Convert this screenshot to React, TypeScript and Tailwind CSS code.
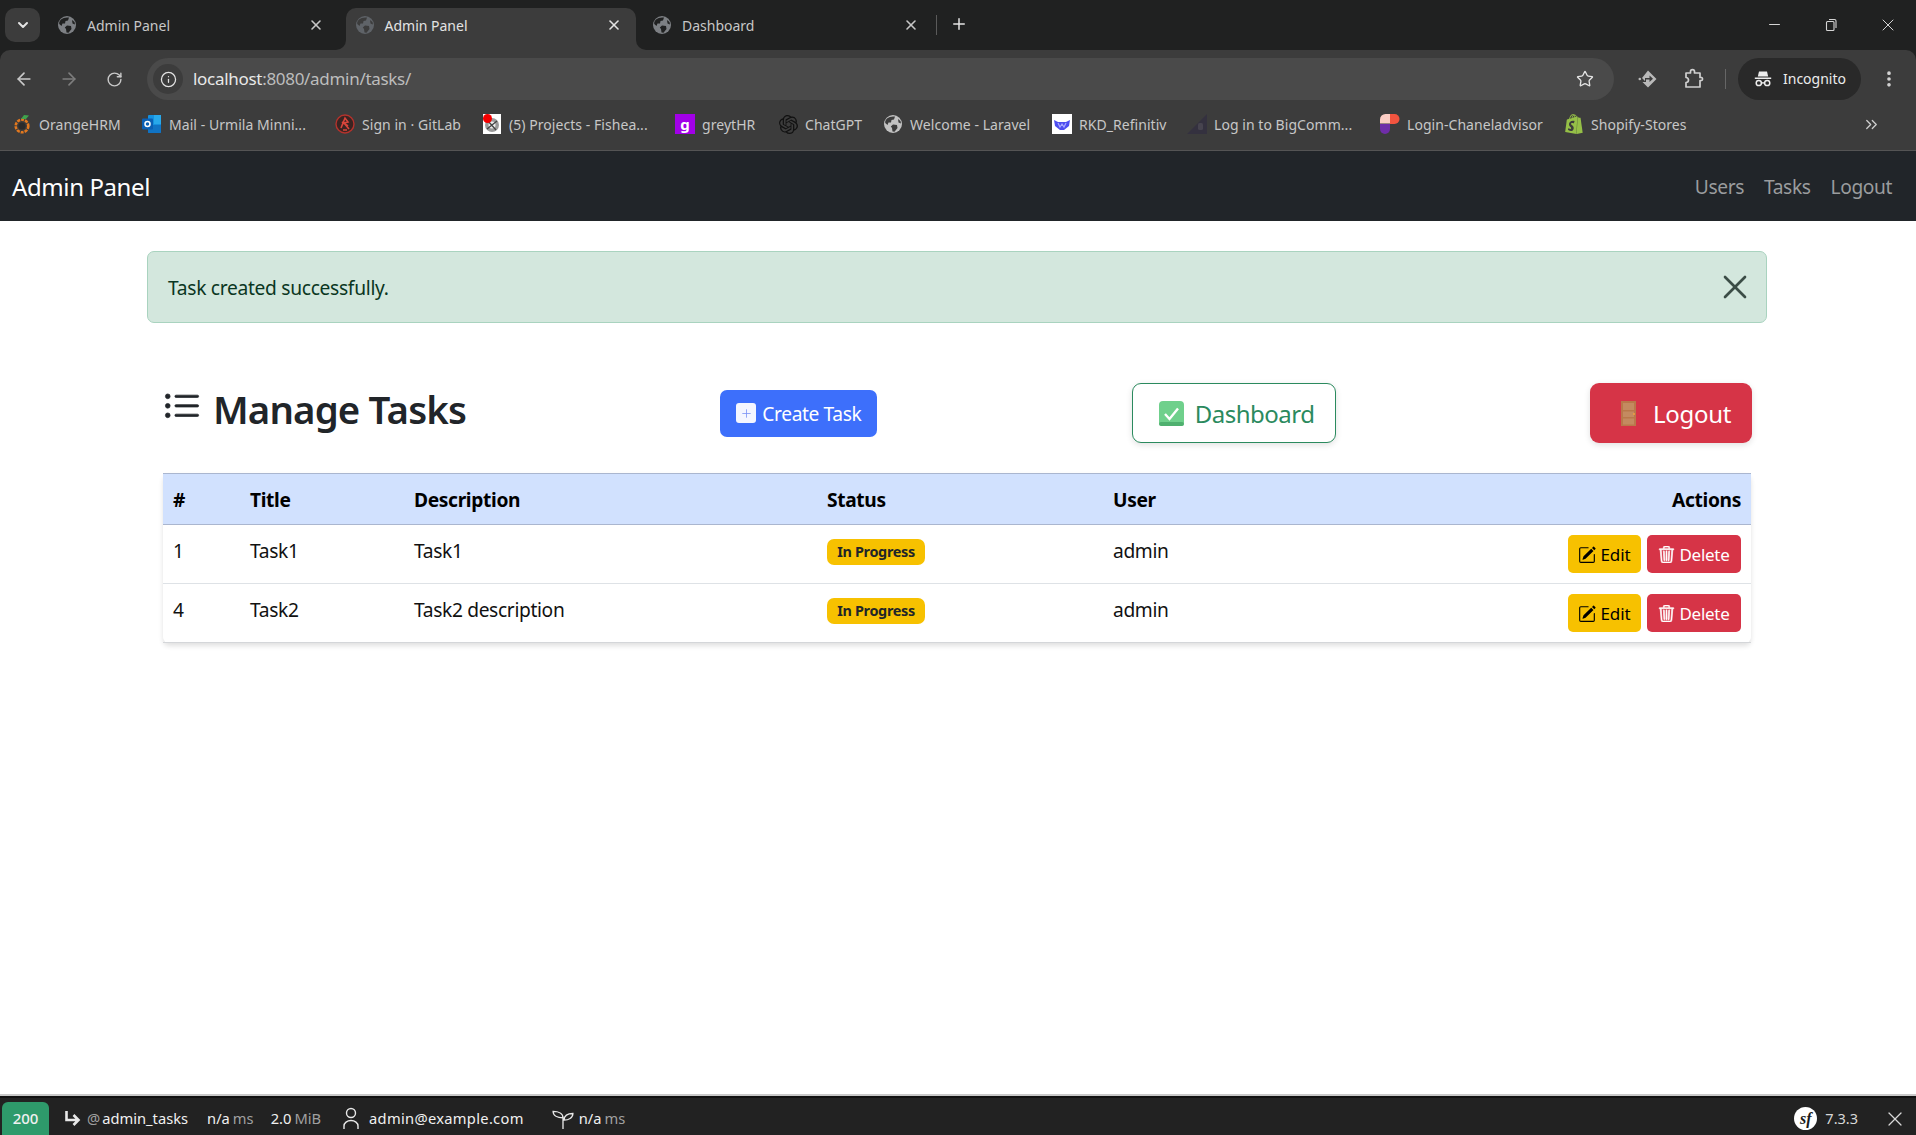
import { ArrowLeft, ArrowRight, Info, Plus, RotateCw, Star, Minus, X, EllipsisVertical, ChevronDown, ChevronsRight } from 'lucide-react'
import { BsListUl, BsPencilSquare, BsTrash3 } from 'react-icons/bs'
import { SiOpenai, SiShopify } from 'react-icons/si'

function Globe({ fill, land, size = 18 }: { fill: string; land: string; size?: number }) {
  return (
    <svg width={size} height={size} viewBox="0 0 18 18" className="shrink-0">
      <circle cx="9" cy="9" r="9" fill={fill} />
      <path d="M3 3.5 C5 2 8 1 11 1.6 L10 4.5 L7.5 5 L7 7.5 L4.5 7.5 L3.5 10 L1.2 8 C1 6 1.8 4.6 3 3.5Z" fill={land} />
      <path d="M9 9.5 L13 10 L13.5 13 L10.5 16.8 L8.5 16.5 L8 13 L6.8 11.5Z" fill={land} />
      <path d="M14 4 L16.5 6 L17 8.5 L14.5 7.5Z" fill={land} />
    </svg>
  )
}

function Tab({ title, active }: { title: string; active?: boolean }) {
  return (
    <div className={active ? 'relative flex h-[42px] w-[290px] items-center rounded-t-[10px] bg-[#3c3c3c] pl-[10px] pr-[14px] pb-[8px]' : 'flex h-[42px] w-[290px] items-center pl-[10px] pr-[14px] pb-[8px]'}>
      <Globe fill={active ? '#5f6368' : '#7d8084'} land={active ? '#3c3c3c' : '#202121'} />
      <span className={active ? 'ml-[11px] flex-1 text-[14px] text-[#e3e3e3]' : 'ml-[11px] flex-1 text-[14px] text-[#c7c7c7]'}>{title}</span>
      <X size={16} strokeWidth={2.4} className={active ? 'text-[#e3e3e3]' : 'text-[#c7c7c7]'} />
      {active && (
        <>
          <div className="absolute bottom-0 left-[-10px] h-[10px] w-[10px] bg-[#3c3c3c]">
            <div className="h-full w-full rounded-br-[10px] bg-[#202121]" />
          </div>
          <div className="absolute bottom-0 right-[-10px] h-[10px] w-[10px] bg-[#3c3c3c]">
            <div className="h-full w-full rounded-bl-[10px] bg-[#202121]" />
          </div>
        </>
      )}
    </div>
  )
}

function RestoreIcon() {
  return (
    <svg width="14" height="14" viewBox="0 0 14 14" fill="none" stroke="#d5d5d5" strokeWidth="1.1">
      <rect x="2.5" y="3.5" width="7.5" height="9" rx="1" />
      <path d="M5 1.5 H10.5 A1.5 1.5 0 0 1 12 3 V10" />
    </svg>
  )
}

function SendIcon() {
  return (
    <svg width="22" height="22" viewBox="0 0 22 22">
      <path d="M11 2.5 L19.5 11 L11 19.5 L5.5 14 H9 V11.5 H12.5 V14 L16 10.8 L12.5 7.6 V10 H8 V13 L5 10 Z" fill="#b9b9b9" />
      <circle cx="2.8" cy="11" r="1.3" fill="#b9b9b9" />
    </svg>
  )
}

function PuzzleIcon() {
  return (
    <svg width="22" height="22" viewBox="0 0 22 22" fill="none" stroke="#d0d0d0" strokeWidth="1.7" strokeLinejoin="round">
      <path d="M4 5 H8.5 V3.6 A2 2 0 0 1 12.5 3.6 V5 H18 V9.5 H19.5 A1.6 1.6 0 0 1 19.5 12.5 H18 V19 H4 V14.5 A2.6 2.6 0 0 0 6.5 12 A2.6 2.6 0 0 0 4 9.5 Z" />
    </svg>
  )
}

function IncognitoIcon() {
  return (
    <svg width="18" height="18" viewBox="0 0 18 18" fill="#ececec">
      <path d="M5 1.5 H13 L14.2 6.5 H3.8 Z" />
      <rect x="0.8" y="7.5" width="16.4" height="1.5" />
      <circle cx="4.8" cy="13" r="2.6" fill="none" stroke="#ececec" strokeWidth="1.5" />
      <circle cx="13.2" cy="13" r="2.6" fill="none" stroke="#ececec" strokeWidth="1.5" />
      <rect x="7.2" y="12.2" width="3.6" height="1.4" />
    </svg>
  )
}

function OrangeIcon() {
  return (
    <svg width="18" height="20" viewBox="0 0 18 20" fill="none">
      <circle cx="9" cy="12" r="6.3" stroke="#e2781f" strokeWidth="2.6" strokeDasharray="3 1" />
      <circle cx="9" cy="12" r="3.5" fill="#2b2b2b" />
      <path d="M8 5 L11 1 L16 1.5 L13 5 Z" fill="#3fa34d" />
    </svg>
  )
}

function OutlookIcon() {
  return (
    <svg width="20" height="20" viewBox="0 0 20 20">
      <rect x="6" y="1" width="13" height="18" rx="1" fill="#1490df" />
      <rect x="12" y="1" width="7" height="9" fill="#28a8ea" />
      <path d="M6 11 H19 V19 H6Z" fill="#0f6cbd" opacity="0.8" />
      <rect x="0" y="4.5" width="11" height="11" rx="1" fill="#0a5fb4" />
      <circle cx="5.5" cy="10" r="2.5" fill="none" stroke="#ffffff" strokeWidth="1.5" />
    </svg>
  )
}

function GitlabIcon() {
  return (
    <svg width="20" height="20" viewBox="0 0 20 20" fill="none">
      <circle cx="10" cy="10" r="9" stroke="#b5322c" strokeWidth="1.4" fill="#3a2422" />
      <path d="M6 14 L10 4 L13 8 L9 9 L14 15 M7 8 L13 12 M8 16 H12" stroke="#d8453b" strokeWidth="1.6" />
    </svg>
  )
}

function ProjectsIcon() {
  return (
    <svg width="18" height="20" viewBox="0 0 18 20">
      <rect width="18" height="20" fill="#ffffff" />
      <circle cx="9" cy="11" r="7" fill="#9a9a9a" />
      <circle cx="9" cy="11" r="3.5" fill="#ededed" />
      <path d="M4 15 L14 7 M5 7 L13 16" stroke="#444444" strokeWidth="1.3" />
      <circle cx="4.5" cy="4.5" r="4.5" fill="#f40000" />
    </svg>
  )
}

function RkdIcon() {
  return (
    <svg width="20" height="20" viewBox="0 0 20 20">
      <rect width="20" height="20" fill="#ffffff" />
      <path d="M2 6 L6 8 H14 L18 6 L17 12 L12 16 H8 L3 12 Z" fill="#4d4df0" />
      <path d="M6 9 L8 13 L10 10 L12 13 L14 9" stroke="#a9a9ff" strokeWidth="1.2" fill="none" />
    </svg>
  )
}

function BigcIcon() {
  return (
    <svg width="20" height="20" viewBox="0 0 20 20">
      <path d="M20 0 V20 H0 Z" fill="#34313f" />
      <rect x="11" y="9" width="5" height="7" rx="1.5" fill="#47444f" />
    </svg>
  )
}

function ChaneladvisorIcon() {
  return (
    <svg width="20" height="20" viewBox="0 0 20 20">
      <path d="M5.5 9.5 H0 V5.5 A5.5 5.5 0 0 1 5.5 0 H10 V9.5 Z" fill="#fbcdc4" />
      <path d="M10 0 H14.5 A5 5 0 0 1 14.5 10 H10 Z" fill="#f2543f" />
      <path d="M0 10 H10 V15 A5 5 0 0 1 0 15 Z" fill="#6f2da8" />
    </svg>
  )
}

function Bookmark({ icon, label, width }: { icon: React.ReactNode; label: string; width: string }) {
  return (
    <div className={`flex items-center ${width}`}>
      <div className="flex w-[20px] shrink-0 justify-center">{icon}</div>
      <span className="ml-[7px] whitespace-nowrap text-[14px] tracking-[0.05px] text-[#c7c7c7]">{label}</span>
    </div>
  )
}

function ChromeBar() {
  return (
    <div className="bg-[#202121] [font-family:'Noto_Sans',sans-serif]">
      <div className="flex h-[50px] items-start pt-[8px]">
        <div className="ml-[5px] flex h-[34px] w-[35px] items-center justify-center rounded-[10px] bg-[#3c3c3c] text-[#e3e3e3]">
          <ChevronDown size={16} strokeWidth={3} />
        </div>
        <div className="ml-[8px] flex gap-[7.5px]">
          <Tab title="Admin Panel" />
          <Tab title="Admin Panel" active />
          <Tab title="Dashboard" />
        </div>
        <div className="ml-[3px] mt-[7px] h-[20px] w-px bg-[#5a5a5a]" />
        <Plus size={18} strokeWidth={2} className="ml-[13px] mt-[7px] text-[#e3e3e3]" />
        <div className="ml-auto flex h-[33px] items-center text-[#d5d5d5]">
          <div className="flex w-[56px] justify-center pr-[3px]"><Minus size={17} strokeWidth={1.5} /></div>
          <div className="flex w-[56px] justify-center pr-[2px]"><RestoreIcon /></div>
          <div className="flex w-[56px] justify-center"><X size={20} strokeWidth={1.2} /></div>
        </div>
      </div>
      <div className="rounded-t-[10px] border-b border-[#545454] bg-[#3c3c3c]">
        <div className="flex h-[56px] items-center pt-[2px]">
          <div className="flex w-[147px] items-center text-[#c9c9c9]">
            <ArrowLeft size={20} strokeWidth={2} className="ml-[14px]" />
            <ArrowRight size={20} strokeWidth={2} className="ml-[25px] text-[#7d7d7d]" />
            <RotateCw size={17} strokeWidth={2} className="ml-[27px]" />
          </div>
          <div className="flex h-[42px] w-[1467px] items-center rounded-full bg-[#4a4a4a] pl-[6px] pr-[20px]">
            <div className="flex h-[30px] w-[30px] items-center justify-center rounded-full bg-[#3c3c3c]">
              <Info size={17} strokeWidth={1.8} className="text-[#e3e3e3]" />
            </div>
            <span className="ml-[10px] text-[17px] tracking-[-0.3px] text-[#e8e8e8]">
              localhost<span className="text-[#bdbdbd]">:8080/admin/tasks/</span>
            </span>
            <Star size={18} strokeWidth={1.8} className="ml-auto text-[#e3e3e3]" />
          </div>
          <div className="ml-[23px]"><SendIcon /></div>
          <div className="ml-[23px]"><PuzzleIcon /></div>
          <div className="ml-[21px] h-[20px] w-px bg-[#666666]" />
          <div className="ml-[12px] flex h-[42px] w-[123px] items-center rounded-full bg-[#292929] pl-[16px]">
            <IncognitoIcon />
            <span className="ml-[11px] pb-[2px] text-[14px] text-[#ececec]">Incognito</span>
          </div>
          <EllipsisVertical size={20} strokeWidth={2.4} className="ml-[18px] text-[#d5d5d5]" />
        </div>
        <div className="flex h-[44px] items-center pb-[8px] pl-[12px]">
          <Bookmark icon={<OrangeIcon />} label="OrangeHRM" width="w-[130px]" />
          <Bookmark icon={<OutlookIcon />} label="Mail - Urmila Minni..." width="w-[193px]" />
          <Bookmark icon={<GitlabIcon />} label="Sign in · GitLab" width="w-[147px]" />
          <Bookmark icon={<ProjectsIcon />} label="(5) Projects - Fishea..." width="w-[193px]" />
          <Bookmark icon={<div className="flex h-[20px] w-[20px] items-center justify-center bg-[#a200e8] text-[15px] font-bold leading-none text-white">g</div>} label="greytHR" width="w-[103px]" />
          <Bookmark icon={<SiOpenai size={19} className="text-[#111111]" />} label="ChatGPT" width="w-[105px]" />
          <Bookmark icon={<Globe fill="#c2c2c2" land="#3c3c3c" />} label="Welcome - Laravel" width="w-[169px]" />
          <Bookmark icon={<RkdIcon />} label="RKD_Refinitiv" width="w-[135px]" />
          <Bookmark icon={<BigcIcon />} label="Log in to BigComm..." width="w-[193px]" />
          <Bookmark icon={<ChaneladvisorIcon />} label="Login-Chaneladvisor" width="w-[184px]" />
          <Bookmark icon={<SiShopify size={20} className="text-[#95bf47]" />} label="Shopify-Stores" width="w-[298px]" />
          <ChevronsRight size={19} strokeWidth={1.6} className="text-[#d0d0d0]" />
        </div>
      </div>
    </div>
  )
}

function CheckEmoji() {
  return (
    <svg width="25" height="25" viewBox="0 0 25 25" className="shrink-0">
      <rect width="25" height="25" rx="4" fill="#6fd08c" />
      <rect y="21" width="25" height="4" rx="2" fill="#4fb06f" />
      <path d="M6 13 L10.5 18 L19 7.5" fill="none" stroke="#ffffff" strokeWidth="2.4" />
    </svg>
  )
}

function DoorEmoji() {
  return (
    <svg width="15" height="25" viewBox="0 0 15 25" className="shrink-0">
      <rect width="15" height="25" fill="#b9784a" />
      <rect x="2" y="2" width="11" height="7" fill="#c48a60" />
      <rect x="2" y="10.5" width="11" height="5.5" fill="#c48a60" />
      <rect x="2" y="17.5" width="11" height="6" fill="#c48a60" />
      <circle cx="13" cy="13" r="1" fill="#f0a040" />
    </svg>
  )
}

function Badge() {
  return (
    <span className="inline-flex h-[26px] w-[98px] items-center justify-center rounded-[7px] bg-[#f7c100] text-[14.4px] font-bold tracking-[-0.3px] text-[#212529]">
      In Progress
    </span>
  )
}

function RowActions() {
  return (
    <div className="flex justify-end gap-[6px]">
      <button className="flex h-[38px] w-[73px] items-center justify-center gap-[4px] rounded-[5px] bg-[#f7c100] pt-[1px] text-[17px] tracking-[-0.1px] text-black">
        <BsPencilSquare size={18} />
        Edit
      </button>
      <button className="flex h-[38px] w-[94px] items-center justify-center gap-[4px] rounded-[5px] bg-[#d63447] pt-[1px] text-[17px] tracking-[-0.25px] text-white">
        <BsTrash3 size={17} stroke="currentColor" strokeWidth={0.6} />
        Delete
      </button>
    </div>
  )
}

const tasks = [
  { id: 1, title: 'Task1', description: 'Task1' },
  { id: 4, title: 'Task2', description: 'Task2 description' },
]

function TasksTable() {
  return (
    <table className="w-[1588px] table-fixed border-collapse rounded-[6px] text-[19.2px] tracking-[-0.35px] text-[#111111] shadow-[0_3px_5px_rgba(0,0,0,0.12)]">
      <colgroup>
        <col className="w-[77px]" />
        <col className="w-[164px]" />
        <col className="w-[413px]" />
        <col className="w-[286px]" />
        <col className="w-[648px]" />
      </colgroup>
      <thead>
        <tr className="h-[51px] border-y border-[#aab6cf] bg-[#d1e1fe] text-left text-black">
          <th className="px-[10px] pt-[2px] font-bold">#</th>
          <th className="px-[10px] pt-[2px] font-bold">Title</th>
          <th className="px-[10px] pt-[2px] font-bold">Description</th>
          <th className="px-[10px] pt-[2px] font-bold">Status</th>
          <th className="px-[10px] pt-[2px] font-bold">
            <div className="flex justify-between">
              <span>User</span>
              <span>Actions</span>
            </div>
          </th>
        </tr>
      </thead>
      <tbody>
        {tasks.map((t, i) => (
          <tr key={t.id} className={i === 0 ? 'h-[59px] border-b border-[#dee2e6]' : 'h-[59px] border-b border-[#d4d6d9]'}>
            <td className="px-[10px] pb-[6px]">{t.id}</td>
            <td className="px-[10px] pb-[6px]">{t.title}</td>
            <td className="px-[10px] pb-[6px]">{t.description}</td>
            <td className="px-[10px] pb-[7px]"><Badge /></td>
            <td className="pl-[10px] pr-[10px]">
              <div className="flex items-center justify-between">
                <span className="pb-[6px]">admin</span>
                <RowActions />
              </div>
            </td>
          </tr>
        ))}
      </tbody>
    </table>
  )
}

function ProfilerBar() {
  return (
    <div className="flex h-[41px] items-end border-t-2 border-[#c9c9c9] bg-[#222222] text-[14.7px] text-[#f0f0f0] shadow-[inset_0_2px_0_#111111] [font-family:'Noto_Sans',sans-serif]">
      <div className="ml-[2px] flex h-[33px] w-[47px] items-center justify-center rounded-t-[6px] bg-[#2e9a6b] text-[15px] font-medium">200</div>
      <div className="flex h-[33px] flex-1 items-center">
        <svg width="18" height="18" viewBox="0 0 18 18" fill="none" stroke="#e8e8e8" strokeWidth="2.6" className="ml-[15px]">
          <path d="M2.5 1 V10 H14 M9.5 5 L14.5 10 L9.5 15" />
        </svg>
        <span className="ml-[5px] text-[#a0a0a0]">@</span>
        <span className="ml-[2px]">admin_tasks</span>
        <span className="ml-[19px]">n/a</span>
        <span className="ml-[3px] text-[#a0a0a0]">ms</span>
        <span className="ml-[17px]">2.0</span>
        <span className="ml-[3px] text-[#a0a0a0]">MiB</span>
        <svg width="16" height="24" viewBox="0 0 16 24" fill="none" stroke="#e8e8e8" strokeWidth="1.4" className="ml-[22px]">
          <circle cx="8" cy="6" r="4.5" />
          <path d="M1 22 V19 A7 5.5 0 0 1 15 19 V22" />
        </svg>
        <span className="ml-[10px] tracking-[0.3px]">admin@example.com</span>
        <svg width="22" height="22" viewBox="0 0 20 20" fill="none" stroke="#e8e8e8" strokeWidth="1.2" className="ml-[28px]">
          <path d="M10 19 V8 M10 9 C10 5 6 3 1 3 C1 7 5 9 10 9 Z M11 11 C11 7 14 5 19 5 C19 9 15 11 11 11 Z" />
        </svg>
        <span className="ml-[5px]">n/a</span>
        <span className="ml-[3px] text-[#a0a0a0]">ms</span>
        <div className="ml-auto flex h-[23px] w-[23px] items-center justify-center rounded-full bg-white text-[16px] font-bold italic leading-none text-[#1a1a1a] [font-family:'Liberation_Serif',serif]">
          sf
        </div>
        <span className="ml-[8px] text-[14.5px] text-[#d8d8d8]">7.3.3</span>
        <X size={24} strokeWidth={1.2} className="ml-[25px] mr-[9px] text-[#d8d8d8]" />
      </div>
    </div>
  )
}

export default function App() {
  return (
    <div className="flex h-screen flex-col overflow-hidden bg-white [font-family:'Noto_Sans',sans-serif]">
      <ChromeBar />
      {/* navbar */}
      <nav className="flex h-[70px] items-center justify-between bg-[#212529] pl-[12px] pr-[24px] pt-[2px]">
        <span className="text-[24px] tracking-[-0.4px] text-white">Admin Panel</span>
        <div className="flex gap-[20px] text-[19.2px] tracking-[-0.4px] text-[#9a9c9e]">
          <span>Users</span>
          <span>Tasks</span>
          <span>Logout</span>
        </div>
      </nav>

      <main className="flex-1 pl-[147px] pr-[149px] pt-[30px]">
        <div className="flex h-[72px] items-center justify-between rounded-[7px] border border-[#a9d3bf] bg-[#d3e7dd] pl-[20px] pr-[11px] text-[19.2px] tracking-[-0.3px] text-[#0a3622]">
          <span className="pt-[2px]">Task created successfully.</span>
          <X size={40} strokeWidth={1.6} className="text-[#3b4d46]" />
        </div>

        <div className="mt-[60px] flex h-[60px] items-center justify-between pl-[18px] pr-[15px]">
          <h2 className="-mt-[6px] flex items-center text-[38.4px] font-semibold tracking-[-0.85px] text-[#212529]">
            <BsListUl size={38} stroke="currentColor" strokeWidth={0.3} className="-mt-[6px] -ml-[2px]" />
            <span className="ml-[12px]">Manage Tasks</span>
          </h2>
          <button className="flex h-[47px] w-[157px] items-center justify-start gap-[6px] rounded-[7px] bg-[#3d6ffb] pl-[16px] pt-[2px] text-[19.2px] tracking-[-0.4px] text-white">
            <span className="-mt-[2px] flex h-[20px] w-[20px] items-center justify-center rounded-[3px] bg-[#f4f6ff]">
              <Plus size={13} strokeWidth={1.5} className="text-[#7b93f5]" />
            </span>
            Create Task
          </button>
          <button className="flex h-[60px] w-[204px] items-center justify-start gap-[11px] rounded-[9px] border border-[#2b8a5e] bg-white pl-[26px] pt-[1px] text-[24px] tracking-[-0.5px] text-[#2b8a5e] shadow-[0_2px_6px_rgba(0,0,0,0.12)]">
            <CheckEmoji />
            Dashboard
          </button>
          <button className="flex h-[60px] w-[162px] items-center justify-start gap-[17px] rounded-[9px] bg-[#d63447] pl-[31px] pt-[1px] text-[24px] tracking-[-0.3px] text-white shadow-[0_2px_6px_rgba(0,0,0,0.12)]">
            <DoorEmoji />
            Logout
          </button>
        </div>

        <div className="mt-[30px] pl-[16px]">
          <TasksTable />
        </div>
      </main>

      <ProfilerBar />
    </div>
  )
}
